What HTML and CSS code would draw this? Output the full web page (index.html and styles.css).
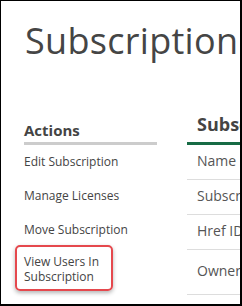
FILE: index.html
```html
<!DOCTYPE html>
<html>
<head>
<meta charset="utf-8">
<link rel="stylesheet" href="styles.css">
</head>
<body>
<div class="frame">
  <h1 class="title">Subscription</h1>
  <div class="columns">
    <aside class="sidebar">
      <h2 class="side-head">Actions</h2>
      <ul class="actions">
        <li class="action">Edit Subscription</li>
        <li class="action">Manage Licenses</li>
        <li class="action">Move Subscription</li>
        <li class="action highlighted">View Users In Subscription</li>
      </ul>
    </aside>
    <main class="main">
      <h2 class="main-head">Subscription Details</h2>
      <div class="row">Name</div>
      <div class="row">Subscription ID</div>
      <div class="row">Href ID</div>
      <div class="row tall">Owner</div>
    </main>
  </div>
</div>
</body>
</html>
```

FILE: styles.css
```css
html, body {
  margin: 0;
  padding: 0;
  background: #fff;
}
.frame {
  box-sizing: border-box;
  width: 242px;
  height: 306px;
  border-style: solid;
  border-color: #000;
  border-width: 1px 2px 2px 1px;
  padding: 20px 0 0 23px;
  overflow: hidden;
  font-family: "Open Sans", sans-serif;
  color: #444;
}
.title {
  margin: 0 0 0 1px;
  font-size: 36px;
  font-weight: 400;
  line-height: 40px;
  letter-spacing: 0.3px;
  white-space: nowrap;
  color: #454545;
}
.columns {
  display: flex;
  align-items: flex-start;
  gap: 30px;
  margin-top: 51px;
  width: 400px;
}
.sidebar {
  flex: 0 0 133px;
  padding-top: 8px;
}
.side-head {
  margin: 0;
  font-size: 15px;
  font-weight: 700;
  line-height: 20px;
  padding-bottom: 2px;
  border-bottom: 3px solid #ccc;
  color: #444;
}
.actions {
  list-style: none;
  margin: 0;
  padding: 9px 0 0;
}
.action {
  position: relative;
  font-size: 12px;
  line-height: 15px;
  color: #444;
  margin-bottom: 19px;
  white-space: nowrap;
}
.action.highlighted {
  white-space: normal;
  width: 90px;
  margin-top: -2px;
}
.action.highlighted::after {
  content: "";
  position: absolute;
  left: -9px;
  top: -9px;
  width: 98px;
  height: 46px;
  box-sizing: border-box;
  border: 2px solid #e5484d;
  border-radius: 5px;
  box-shadow: 0 2px 4px rgba(0,0,0,0.3);
}
.main {
  flex: 0 0 220px;
}
.main-head {
  margin: 0;
  padding: 0 0 6px 10px;
  font-size: 18px;
  font-weight: 700;
  line-height: 24px;
  white-space: nowrap;
  border-bottom: 3px solid #176b45;
  color: #444;
}
.row {
  padding: 6px 0 8px 10px;
  font-size: 14px;
  line-height: 20px;
  color: #555;
  border-bottom: 1px solid #ddd;
  white-space: nowrap;
}
.row.tall {
  padding: 11px 0 13px 10px;
}
```
